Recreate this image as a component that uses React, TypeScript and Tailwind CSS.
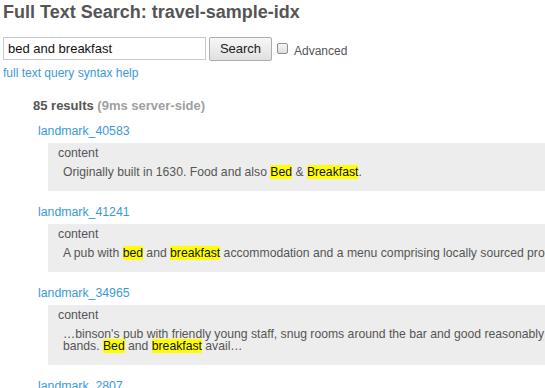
import React from "react";

const FONT = '"Liberation Sans", Arial, sans-serif';

const Hl = ({ children }: { children: React.ReactNode }) => (
  <span className="bg-[#ffff00] text-[#111]">{children}</span>
);

const Result = ({ id, children }: { id: string; children: React.ReactNode }) => (
  <div className="mb-[14px]">
    <a className="block ml-[38px] text-[12.3px] leading-[14px] text-[#3a9ad9]" href="#">
      {id}
    </a>
    <div className="ml-[48px] mt-[5px] w-[760px] bg-[#ededed] pt-[3px] pb-[13px] pl-[10px]">
      <div className="text-[12.3px] leading-[14px] text-[#555]">content</div>
      <div className="pl-[5px] mt-[6px] text-[12.2px] leading-[12px] text-[#555]">{children}</div>
    </div>
  </div>
);

export default function App() {
  return (
    <div
      className="w-[545px] h-[388px] overflow-hidden bg-white text-[#555]"
      style={{ fontFamily: FONT }}
    >
      <h1 className="ml-[3px] pt-[2px] text-[18px] font-bold leading-[20px] text-[#555]">
        Full Text Search: travel-sample-idx
      </h1>
      <div className="mt-[15px] ml-[3px] flex h-[24px] items-start">
        <input
          className="w-[203px] h-[23px] border border-[#c9c9c9] px-[4px] text-[13px] text-[#111] outline-none"
          defaultValue="bed and breakfast"
          style={{ fontFamily: FONT }}
        />
        <button
          className="ml-[3px] w-[63px] h-[24px] rounded-[2px] border border-[#adadad] bg-gradient-to-b from-[#f7f7f7] to-[#e0e0e0] text-[13px] leading-[20px] text-[#222]"
          style={{ fontFamily: FONT }}
        >
          Search
        </button>
        <span className="ml-[5px] mt-[6px] inline-block w-[11px] h-[11px] rounded-[2px] border border-[#8e8e8e] bg-gradient-to-b from-[#f5f5f5] to-[#dedede]" />
        <span className="ml-[6px] mt-[7px] text-[12px] leading-[14px] text-[#555]">Advanced</span>
      </div>
      <a className="block ml-[3px] mt-[5px] text-[12px] leading-[14px] text-[#3a9ad9]" href="#">
        full text query syntax help
      </a>
      <div className="ml-[33px] mt-[18px] text-[13px] font-bold leading-[15px]">
        <span className="text-[#555]">85 results</span>{" "}
        <span className="text-[#a0a0a0]">(9ms server-side)</span>
      </div>
      <div className="mt-[11px]">
        <Result id="landmark_40583">
          Originally built in 1630. Food and also <Hl>Bed</Hl> &amp; <Hl>Breakfast</Hl>.
        </Result>
        <Result id="landmark_41241">
          <span className="whitespace-nowrap">
            A pub with <Hl>bed</Hl> and <Hl>breakfast</Hl> accommodation and a menu comprising locally sourced produce.
          </span>
        </Result>
        <Result id="landmark_34965">
          <span className="whitespace-nowrap">
            …binson's pub with friendly young staff, snug rooms around the bar and good reasonably priced food, live
          </span>
          <br />
          bands. <Hl>Bed</Hl> and <Hl>breakfast</Hl> avail…
        </Result>
        <Result id="landmark_2807">
          Comfortable <Hl>bed</Hl> and <Hl>breakfast</Hl>.
        </Result>
      </div>
    </div>
  );
}
